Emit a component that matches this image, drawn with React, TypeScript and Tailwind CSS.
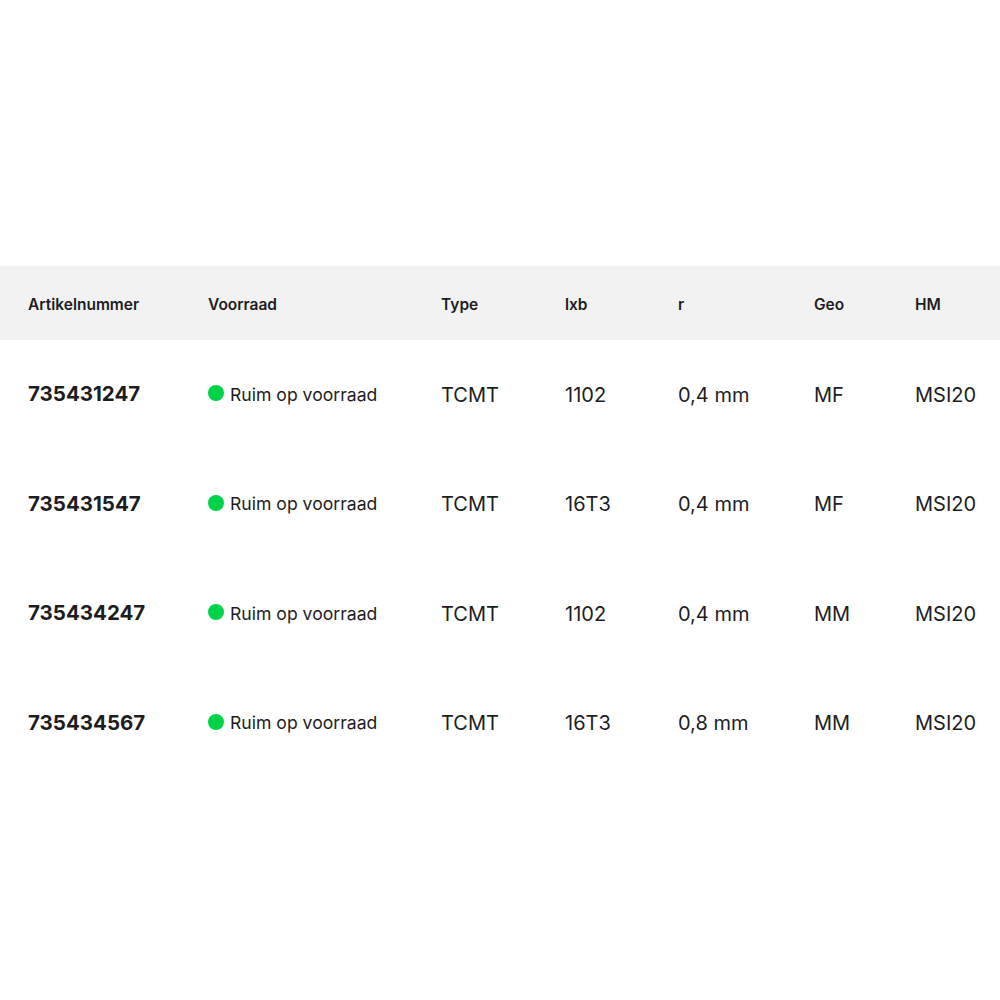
const columns = [
  { label: 'Artikelnummer', w: 'w-[180px]' },
  { label: 'Voorraad', w: 'w-[233px]' },
  { label: 'Type', w: 'w-[124px]' },
  { label: 'lxb', w: 'w-[113px]' },
  { label: 'r', w: 'w-[136px]' },
  { label: 'Geo', w: 'w-[101px]' },
  { label: 'HM', w: 'flex-1' },
];

const rows = [
  { nr: '735431247', type: 'TCMT', lxb: '1102', r: '0,4 mm', geo: 'MF', hm: 'MSI20' },
  { nr: '735431547', type: 'TCMT', lxb: '16T3', r: '0,4 mm', geo: 'MF', hm: 'MSI20' },
  { nr: '735434247', type: 'TCMT', lxb: '1102', r: '0,4 mm', geo: 'MM', hm: 'MSI20' },
  { nr: '735434567', type: 'TCMT', lxb: '16T3', r: '0,8 mm', geo: 'MM', hm: 'MSI20' },
];

export default function App() {
  return (
    <div
      className="w-[1000px] h-[1000px] bg-white pt-[266px] text-[#1d1d1f]"
      style={{ fontFamily: 'Inter, "Noto Sans", sans-serif' }}
    >
      {/* header */}
      <div className="flex items-center h-[74px] bg-[#f2f2f2] pl-[28px] pt-[3px] text-[15.5px] font-semibold">
        {columns.map((c) => (
          <div key={c.label} className={c.w}>
            {c.label}
          </div>
        ))}
      </div>

      {/* rows */}
      {rows.map((r) => (
        <div key={r.nr} className="flex items-center h-[109.5px] pl-[28px] text-[20px]">
          <div className="w-[180px] font-bold text-[20.5px]">{r.nr}</div>
          <div className="w-[233px] flex items-center gap-[6px] text-[17.6px]">
            <span className="w-[16px] h-[16px] rounded-full bg-[#00d34a] -mt-[3px]" />
            Ruim op voorraad
          </div>
          <div className="w-[124px]">{r.type}</div>
          <div className="w-[113px]">{r.lxb}</div>
          <div className="w-[136px]">{r.r}</div>
          <div className="w-[101px]">{r.geo}</div>
          <div className="flex-1">{r.hm}</div>
        </div>
      ))}
    </div>
  );
}
